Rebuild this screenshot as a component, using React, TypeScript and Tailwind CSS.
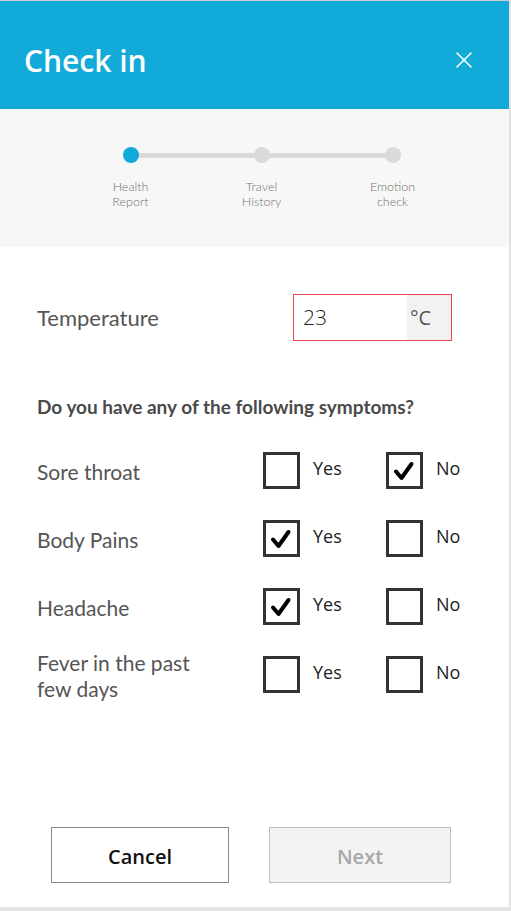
import { X } from 'lucide-react'

const symptoms = [
  { label: 'Sore throat', yes: false, no: true },
  { label: 'Body Pains', yes: true, no: false },
  { label: 'Headache', yes: true, no: false },
  { label: 'Fever in the past few days', yes: false, no: false },
]

const steps = [
  ['Health', 'Report'],
  ['Travel', 'History'],
  ['Emotion', 'check'],
]

function Box({ checked }: { checked: boolean }) {
  return (
    <div className="flex h-[37px] w-[37px] shrink-0 items-center justify-center border-[3px] border-[#333] bg-white">
      {checked && (
        <svg width="31" height="31" viewBox="0 0 31 31" fill="none">
          <path
            d="M7 16.5 L12.5 23 L22.5 9"
            stroke="#000"
            strokeWidth="4"
            strokeLinecap="round"
            strokeLinejoin="round"
          />
        </svg>
      )}
    </div>
  )
}

function Option({ checked, text, wide }: { checked: boolean; text: string; wide?: boolean }) {
  return (
    <div className={`flex shrink-0 items-center gap-[13px] ${wide ? 'w-[123px]' : ''}`}>
      <Box checked={checked} />
      <span className="-mt-[4px] text-[18px] text-[#222] font-['Open_Sans',sans-serif]">{text}</span>
    </div>
  )
}

export default function App() {
  return (
    <div className="flex h-[911px] w-[511px] flex-col border-t border-r-2 border-b-4 border-t-[#d0d0d0] border-r-[#e2e2e2] border-b-[#e4e4e4] bg-white font-['Lato',sans-serif]">
      <header className="flex h-[108px] shrink-0 items-center justify-between bg-[#11aad9] pl-6 pr-[31px] pt-[10px]">
        <h1 className="text-[30px] font-semibold text-white font-['Open_Sans',sans-serif]">Check in</h1>
        <X className="h-[28px] w-[28px] text-white" strokeWidth={1.3} />
      </header>

      <section className="h-[138px] shrink-0 bg-[#f7f7f7] pl-[90px] pt-[38px]">
        <div className="relative flex gap-[50px]">
          <div className="absolute left-[40px] top-[6px] h-[5px] w-[261px] bg-[#dadada]" />
          {steps.map((s, i) => (
            <div key={i} className="relative flex w-[81px] flex-col items-center">
              <div className={`h-[16px] w-[16px] rounded-full ${i === 0 ? 'bg-[#11aad9]' : 'bg-[#dadada]'}`} />
              <div className="mt-[16px] text-center text-[12.5px] font-light leading-[15px] text-[#707070]">
                {s[0]}
                <br />
                {s[1]}
              </div>
            </div>
          ))}
        </div>
      </section>

      <main className="flex flex-1 flex-col px-[37px]">
        <div className="mt-[47px] flex items-center">
          <span className="w-[256px] shrink-0 text-[22px] text-[#555]">Temperature</span>
          <div className="flex h-[47px] w-[159px] shrink-0 border border-[#f0444c]">
            <span className="flex flex-1 items-center pl-[9px] text-[21px] font-light text-[#222] font-['Open_Sans',sans-serif]">23</span>
            <span className="flex w-[44px] items-center pl-[3px] text-[20px] text-[#555] font-['Open_Sans',sans-serif] bg-[#f2f2f2]">°C</span>
          </div>
        </div>

        <p className="mt-[52px] text-[19px] font-bold text-[#4a4a4a]">Do you have any of the following symptoms?</p>

        <div className="mt-[15px] flex flex-col">
          {symptoms.map((s) => (
            <div key={s.label} className="flex h-[68px] items-center">
              <span className="w-[226px] shrink-0 pr-[56px] pt-[2px] text-[21px] leading-[26px] text-[#555]">{s.label}</span>
              <Option checked={s.yes} text="Yes" wide />
              <Option checked={s.no} text="No" />
            </div>
          ))}
        </div>

        <div className="mt-auto mb-[24px] flex gap-[40px] pl-[14px]">
          <button className="h-[56px] w-[178px] shrink-0 border border-[#8a8a8a] bg-white pt-[4px] text-[20px] font-semibold text-[#111] font-['Open_Sans',sans-serif]">
            Cancel
          </button>
          <button className="h-[56px] w-[182px] shrink-0 border border-[#bdbdbd] bg-[#f3f3f3] pt-[4px] text-[20px] font-semibold text-[#a8a8a8] font-['Open_Sans',sans-serif]">
            Next
          </button>
        </div>
      </main>
    </div>
  )
}
